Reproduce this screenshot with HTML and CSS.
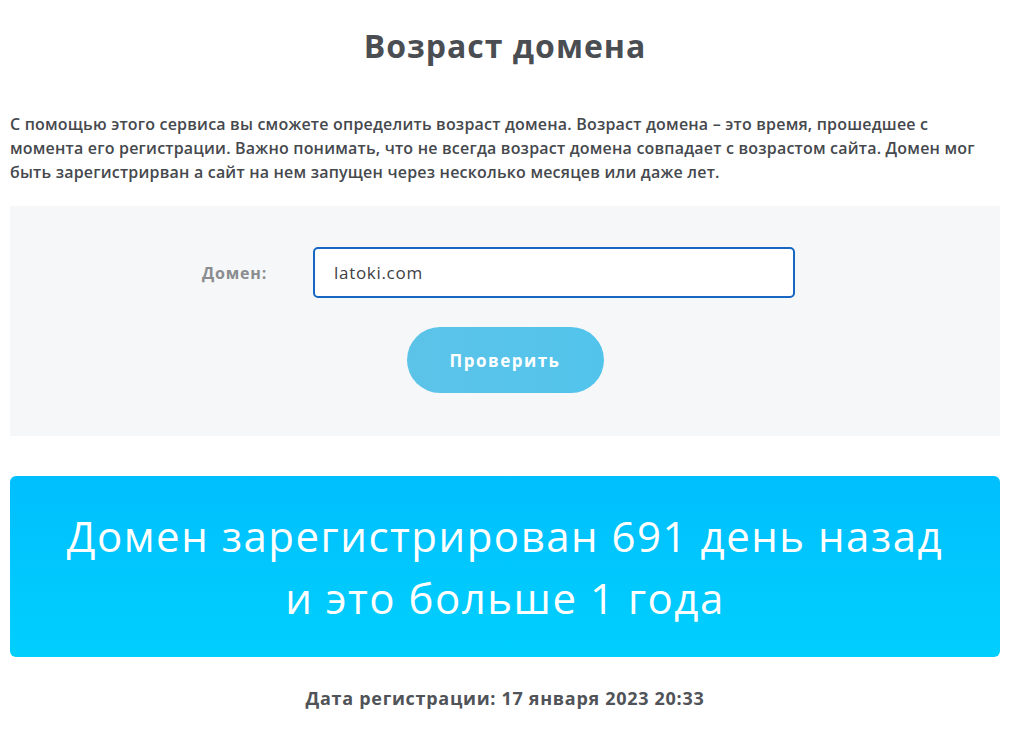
FILE: index.html
```html
<!DOCTYPE html>
<html lang="ru">
<head>
<meta charset="utf-8">
<title>Возраст домена</title>
<link rel="stylesheet" href="styles.css">
</head>
<body>
<main class="page">
  <h1 class="title">Возраст домена</h1>
  <p class="intro">С помощью этого сервиса вы сможете определить возраст домена. Возраст домена – это время, прошедшее с момента его регистрации. Важно понимать, что не всегда возраст домена совпадает с возрастом сайта. Домен мог быть зарегистрирван а сайт на нем запущен через несколько месяцев или даже лет.</p>
  <form class="panel">
    <div class="row">
      <label class="label" for="domain">Домен:</label>
      <input class="input" id="domain" type="text" value="latoki.com">
    </div>
    <button class="btn" type="button">Проверить</button>
  </form>
  <section class="result">
    <p class="result-text">Домен зарегистрирован 691 день назад<br>и это больше 1 года</p>
  </section>
  <p class="date">Дата регистрации: 17 января 2023 20:33</p>
</main>
</body>
</html>
```
FILE: styles.css
```css
* { box-sizing: border-box; }
html, body { margin: 0; padding: 0; background: #fff; }
body { font-family: "Open Sans", "DejaVu Sans", sans-serif; color: #4a4d52; }
.page { width: 990px; margin-left: 10px; padding-top: 26px; }
.title {
  margin: 0;
  text-align: center;
  font-size: 32px;
  line-height: 40px;
  font-weight: 700;
  letter-spacing: 1px;
  color: #4a4e53;
}
.intro {
  margin: 46px 0 0;
  font-size: 16px;
  line-height: 24px;
  font-weight: 600;
  letter-spacing: 0.2px;
  color: #45484d;
}
.panel {
  margin: 22px 0 0;
  background: #f5f7f8;
  height: 230px;
  padding-top: 41px;
  display: flex;
  flex-direction: column;
  align-items: center;
}
.row { display: flex; align-items: center; margin-right: 13px; }
.label {
  width: 111px;
  font-size: 16px;
  font-weight: 700;
  letter-spacing: 0.8px;
  color: #8a8c8f;
}
.input {
  width: 482px;
  height: 51px;
  border: 2px solid #1766c2;
  border-radius: 5px;
  background: #fff;
  padding: 0 19px;
  font-family: inherit;
  font-size: 17px;
  font-weight: 500;
  letter-spacing: 0.7px;
  color: #3d4044;
  outline: none;
}
.btn {
  margin-top: 29px;
  width: 197px;
  height: 66px;
  border: 0;
  border-radius: 33px;
  background: linear-gradient(90deg, #5cc3e8, #52c4ec);
  color: #fff;
  font-family: inherit;
  font-size: 17px;
  font-weight: 700;
  letter-spacing: 1.5px;
}
.result {
  margin-top: 40px;
  height: 181px;
  border-radius: 6px;
  background: linear-gradient(180deg, #00bffe, #00cffd);
  display: flex;
  align-items: center;
  justify-content: center;
}
.result-text {
  margin: 0;
  text-align: center;
  color: #fff;
  font-size: 42px;
  line-height: 62px;
  font-weight: 400;
  letter-spacing: 1.5px;
}
.date {
  margin: 29px 0 0;
  text-align: center;
  font-size: 18px;
  font-weight: 700;
  letter-spacing: 0.7px;
  color: #505358;
}
```
